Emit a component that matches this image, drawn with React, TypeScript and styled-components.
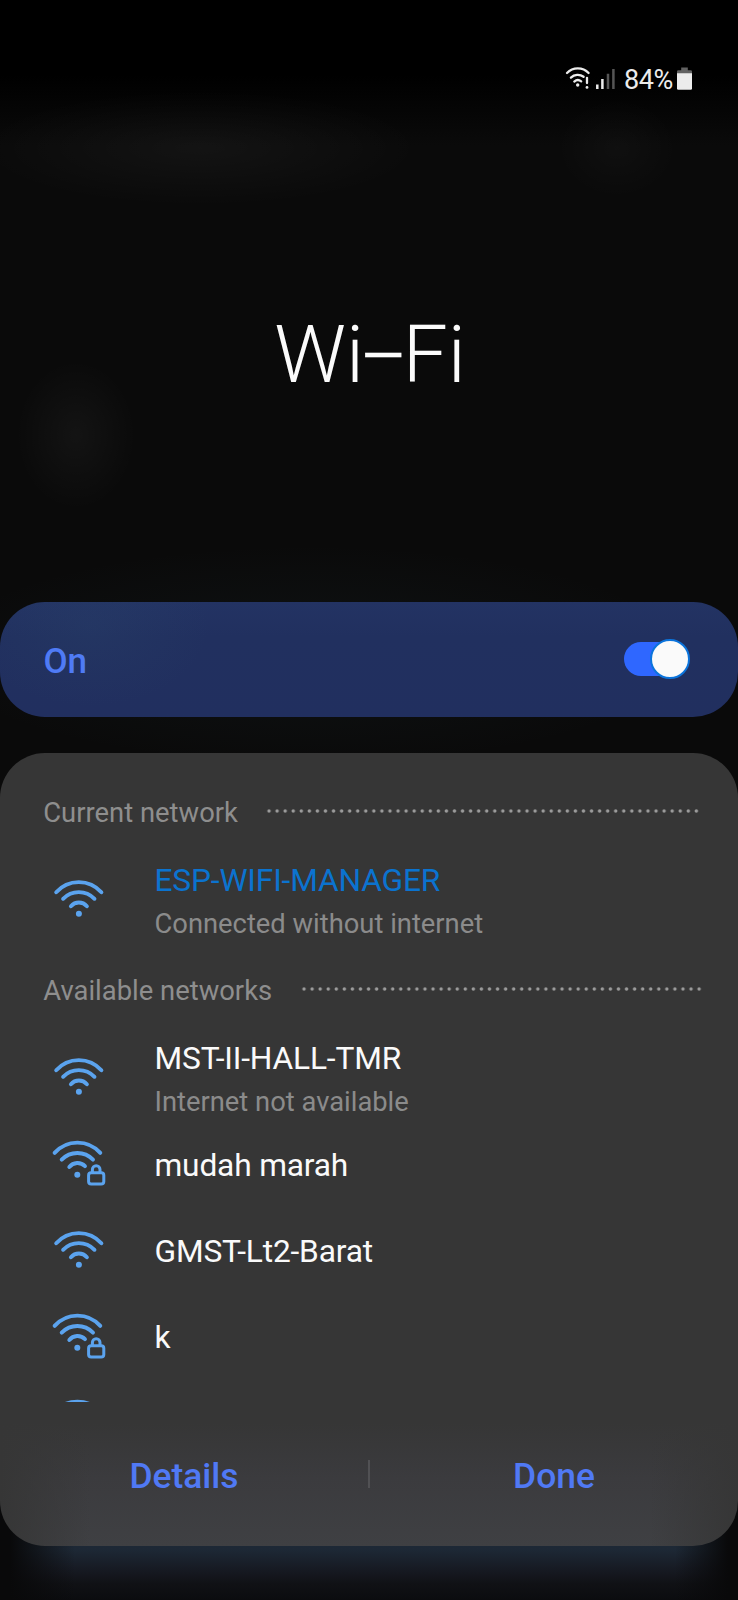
import React from "react";
import styled, { createGlobalStyle } from "styled-components";

const GlobalStyle = createGlobalStyle`
  * { box-sizing: border-box; }
  body {
    margin: 0;
    background: #0a0a0a;
    font-family: Roboto, "Liberation Sans", sans-serif;
  }
`;

const Screen = styled.main`
  width: 738px;
  height: 1600px;
  overflow: hidden;
  display: flex;
  flex-direction: column;
  background:
    linear-gradient(90deg, #09090a 10px, transparent 75px, transparent 675px, #09090a 728px) 0 1500px / 738px 100px no-repeat,
    linear-gradient(180deg, #1e2a38 0, #1d2835 50px, #171b24 68px, #101115 84px, #0b0c0f 100px) 0 1500px / 738px 100px no-repeat,
    radial-gradient(ellipse 60px 75px at 76px 435px, rgba(255, 255, 255, 0.04), rgba(255, 255, 255, 0.02) 50%, transparent),
    radial-gradient(ellipse 220px 58px at 200px 148px, rgba(255, 255, 255, 0.04), rgba(255, 255, 255, 0.018) 50%, transparent),
    radial-gradient(ellipse 60px 50px at 617px 148px, rgba(255, 255, 255, 0.025), transparent),
    radial-gradient(ellipse 380px 110px at 310px 655px, rgba(80, 130, 150, 0.07), transparent),
    linear-gradient(180deg, #000 0, #000 75px, #0a0a0a 145px);
`;

const StatusBar = styled.header`
  height: 160px;
  padding: 60px 45px 0 565px;
  display: flex;
  align-items: flex-start;
  color: #ececec;
`;

const BatteryLevel = styled.span`
  width: 53px;
  margin-left: 5px;
  padding-top: 1px;
  font-size: 27px;
  line-height: 39px;
  letter-spacing: -0.4px;
  white-space: nowrap;
`;

const Hero = styled.section`
  height: 442px;
  padding: 145px 0 0 2px;
  text-align: center;
`;

const Title = styled.h1`
  margin: 0;
  font-size: 80px;
  line-height: 100px;
  font-weight: 300;
  color: #fbfbfb;
`;

const TitleDash = styled.span`
  display: inline-block;
  margin-left: -4.7px;
  letter-spacing: -8.5px;
  -webkit-text-stroke: 0.7px #fbfbfb;
  transform: translate(-1.3px, 2.4px) scaleX(0.91);
`;

const PowerBar = styled.section`
  height: 114.7px;
  flex: none;
  padding: 0 48px 0 43.5px;
  border-radius: 45px;
  display: flex;
  align-items: center;
  justify-content: space-between;
  background:
    radial-gradient(ellipse 120px 80px at 90px 25px, rgba(60, 110, 130, 0.09), transparent),
    linear-gradient(180deg, #233363 0, #21305f 35px, #212f5f 100%);
`;

const PowerLabel = styled.span`
  padding-top: 5px;
  font-size: 35px;
  line-height: 42px;
  font-weight: 500;
  color: #4f7bf5;
`;

const Switch = styled.button`
  width: 66px;
  height: 34px;
  margin-bottom: 1px;
  padding: 0;
  border: 0;
  border-radius: 17px;
  display: flex;
  align-items: center;
  justify-content: flex-end;
  background: linear-gradient(#2f67ff, #2f67ff) 0 0 / 45px 34px no-repeat;
`;

const Thumb = styled.span`
  width: 40px;
  height: 40px;
  flex: none;
  border-radius: 50%;
  border: 2px solid #0b74dc;
  background: #fafafa;
`;

const Panel = styled.section`
  height: 792.7px;
  flex: none;
  margin-top: 36.3px;
  border-radius: 45px;
  overflow: hidden;
  background:
    linear-gradient(90deg, #363636 0, rgba(54, 54, 54, 0) 90px, rgba(54, 54, 54, 0) 650px, #363636 738px),
    linear-gradient(180deg, #363636 670px, #3b3b3e 725px, #3f4043 100%);
`;

const NetworkList = styled.div`
  height: 649.4px;
  overflow: hidden;
`;

const GroupHeader = styled.div<{ $first?: boolean }>`
  height: ${(p) => (p.$first ? 104.5 : 92.2)}px;
  padding: ${(p) => (p.$first ? "16px 41px 0 43.3px" : "3.6px 39px 0 43.3px")};
  display: flex;
  align-items: center;
`;

const GroupTitle = styled.h2`
  margin: 0;
  font-size: 27.4px;
  line-height: 36px;
  font-weight: 400;
  color: #8e8e8e;
  white-space: nowrap;
`;

const DottedRule = styled.span<{ $dots: number }>`
  width: ${(p) => p.$dots * 8.07}px;
  height: 4px;
  flex: none;
  margin: 0 -4px 4px auto;
  background: radial-gradient(circle at 50% 50%, #9b9b9b 1.2px, transparent 2.1px) 0 0 / 8.07px 4px repeat-x;
`;

const NetworkRow = styled.div<{ $tall?: boolean }>`
  height: ${(p) => (p.$tall ? 85.8 : 86.3)}px;
  padding-left: 48px;
  display: flex;
  align-items: center;
  gap: 46.5px;
`;

const NetworkText = styled.div`
  display: flex;
  flex-direction: column;
  margin-top: 1.6px;
`;

const NetworkName = styled.span<{ $active?: boolean }>`
  font-size: 31.7px;
  line-height: 45px;
  letter-spacing: -0.17px;
  color: ${(p) => (p.$active ? "#0b73cf" : "#fafafa")};
  white-space: nowrap;
`;

const NetworkStatus = styled.span`
  padding-top: 1px;
  font-size: 27.35px;
  line-height: 40.5px;
  color: #8b8b8b;
  white-space: nowrap;
`;

const Footer = styled.footer`
  height: 143.3px;
  padding-top: 3.6px;
  display: flex;
  align-items: center;
`;

const FooterButton = styled.button`
  flex: 1;
  padding: 0;
  border: 0;
  background: none;
  font: 500 35.4px/44px Roboto, "Liberation Sans", sans-serif;
  color: #5079f4;
`;

const Divider = styled.span`
  width: 2px;
  height: 28px;
  margin-bottom: 4px;
  background: #515154;
`;

const WifiIcon = () => (
  <svg width="60" height="60" viewBox="0 0 60 60" fill="none" stroke="#5ba3ee" strokeWidth="3.9" strokeLinecap="round">
    <path d="M8.2 22.3A30.2 30.2 0 0 1 53.4 22.3" />
    <path d="M15.1 28.8A21.8 21.8 0 0 1 46.5 28.8" />
    <path d="M22.9 36.2A10.6 10.6 0 0 1 38.9 36.2" />
    <circle cx="30.9" cy="43.7" r="3" fill="#5ba3ee" stroke="none" />
  </svg>
);

const LockedWifiIcon = () => (
  <svg width="60" height="60" viewBox="0 -0.7 60 60" fill="none" stroke="#5ba3ee" strokeWidth="3.9" strokeLinecap="round">
    <path d="M6.6 18.2A30.5 30.5 0 0 1 52.3 18.2" />
    <path d="M13.7 24.9A21.8 21.8 0 0 1 45 24.9" />
    <path d="M21.3 32.2A10.6 10.6 0 0 1 37 31.4" />
    <circle cx="29.3" cy="40.1" r="3" fill="#5ba3ee" stroke="none" />
    <g strokeWidth="3" strokeLinecap="butt">
      <rect x="40.6" y="38" width="15.2" height="11.3" rx="2.6" />
      <path d="M44.4 38V34.8a3.8 3.8 0 0 1 7.6 0V38" />
    </g>
  </svg>
);

const StatusIcons = () => (
  <svg width="54" height="34" viewBox="565 60 54 34" fill="none" stroke="#ececec" strokeWidth="2.3" strokeLinecap="round">
    <path d="M567 73A14.8 14.8 0 0 1 588.6 73" />
    <path d="M570.9 77.6A10 10 0 0 1 583.6 76.8" />
    <path d="M574.3 81.6A5.4 5.4 0 0 1 581.2 81.4" />
    <circle cx="577.7" cy="85" r="1.7" fill="#ececec" stroke="none" />
    <path d="M587 77.8V83" />
    <circle cx="587" cy="87.4" r="1.4" fill="#ececec" stroke="none" />
    <g strokeWidth="2.5" strokeLinecap="butt">
      <path d="M597.3 84.5V89M602.4 79V89" />
      <path d="M608 73.7V89M613.4 69V89" stroke="#555" />
    </g>
  </svg>
);

const BatteryIcon = () => (
  <svg width="16" height="34" viewBox="677 60 16 34">
    <path d="M677 74V71.6Q677 70.3 678.3 70.3H681.2V67.5H687.8V70.3H690.7Q692 70.3 692 71.6V74Z" fill="#626262" />
    <path d="M677 73.3H692V88.4Q692 89.7 690.7 89.7H678.3Q677 89.7 677 88.4Z" fill="#ececec" />
  </svg>
);

type Network = { name: string; status?: string; locked?: boolean; active?: boolean };

const current: Network = { name: "ESP-WIFI-MANAGER", status: "Connected without internet", active: true };

const available: Network[] = [
  { name: "MST-II-HALL-TMR", status: "Internet not available" },
  { name: "mudah marah", locked: true },
  { name: "GMST-Lt2-Barat" },
  { name: "k", locked: true },
  { name: "", locked: true },
];

const NetworkItem = ({ name, status, locked, active }: Network) => (
  <NetworkRow $tall={!!status}>
    {locked ? <LockedWifiIcon /> : <WifiIcon />}
    <NetworkText>
      <NetworkName $active={active}>{name}</NetworkName>
      {status && <NetworkStatus>{status}</NetworkStatus>}
    </NetworkText>
  </NetworkRow>
);

export default function App() {
  return (
    <>
      <GlobalStyle />
      <Screen>
        <StatusBar>
          <StatusIcons />
          <BatteryLevel>84%</BatteryLevel>
          <BatteryIcon />
        </StatusBar>
        <Hero>
          <Title>
            Wi<TitleDash>–</TitleDash>Fi
          </Title>
        </Hero>
        <PowerBar>
          <PowerLabel>On</PowerLabel>
          <Switch role="switch" aria-checked="true" aria-label="Wi-Fi">
            <Thumb />
          </Switch>
        </PowerBar>
        <Panel>
          <NetworkList>
            <GroupHeader $first>
              <GroupTitle>Current network</GroupTitle>
              <DottedRule $dots={54} />
            </GroupHeader>
            <NetworkItem {...current} />
            <GroupHeader>
              <GroupTitle>Available networks</GroupTitle>
              <DottedRule $dots={50} />
            </GroupHeader>
            {available.map((network, i) => (
              <NetworkItem key={i} {...network} />
            ))}
          </NetworkList>
          <Footer>
            <FooterButton>Details</FooterButton>
            <Divider />
            <FooterButton>Done</FooterButton>
          </Footer>
        </Panel>
      </Screen>
    </>
  );
}
